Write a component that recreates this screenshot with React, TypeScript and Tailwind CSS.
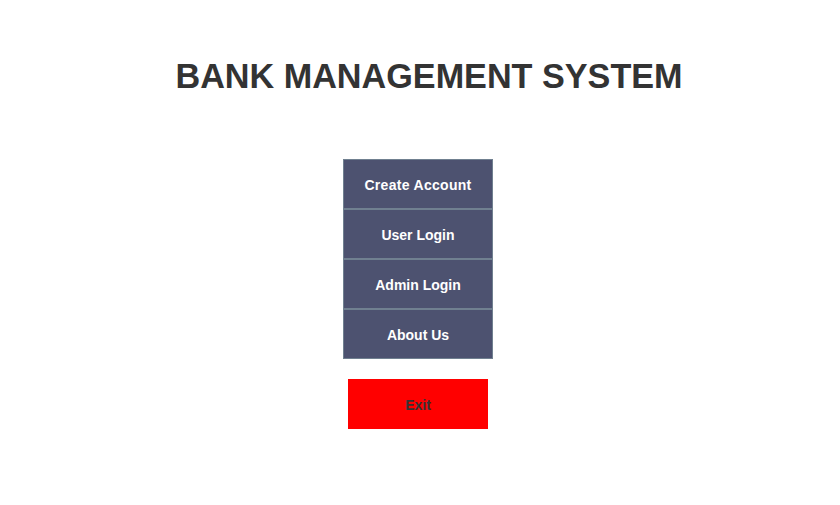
export default function App() {
  const items = ['Create Account', 'User Login', 'Admin Login', 'About Us'];

  return (
    <div className="min-h-screen bg-white flex flex-col items-center font-['Liberation_Sans',Arial,sans-serif]">
      <h1 className="mt-[54px] pl-[18px] text-[34.2px] leading-[44px] font-bold text-[#333333]">
        BANK MANAGEMENT SYSTEM
      </h1>

      <div className="mt-[61px] mr-[4px] flex flex-col w-[150px] border border-[#708090] bg-[#4d5270]">
        {items.map((label, i) => (
          <button
            key={label}
            className={
              i === 0
                ? 'h-[48px] pt-[2px] text-white text-[14px] font-bold tracking-[0.3px]'
                : 'h-[50px] pt-[2px] border-t-2 border-[#708090] text-white text-[14px] font-bold'
            }
          >
            {label}
          </button>
        ))}
      </div>

      <button className="mt-[20px] mr-[4px] w-[140px] h-[50px] pt-[2px] bg-[#ff0000] text-[#333333] text-[14px] font-bold">
        Exit
      </button>
    </div>
  );
}
